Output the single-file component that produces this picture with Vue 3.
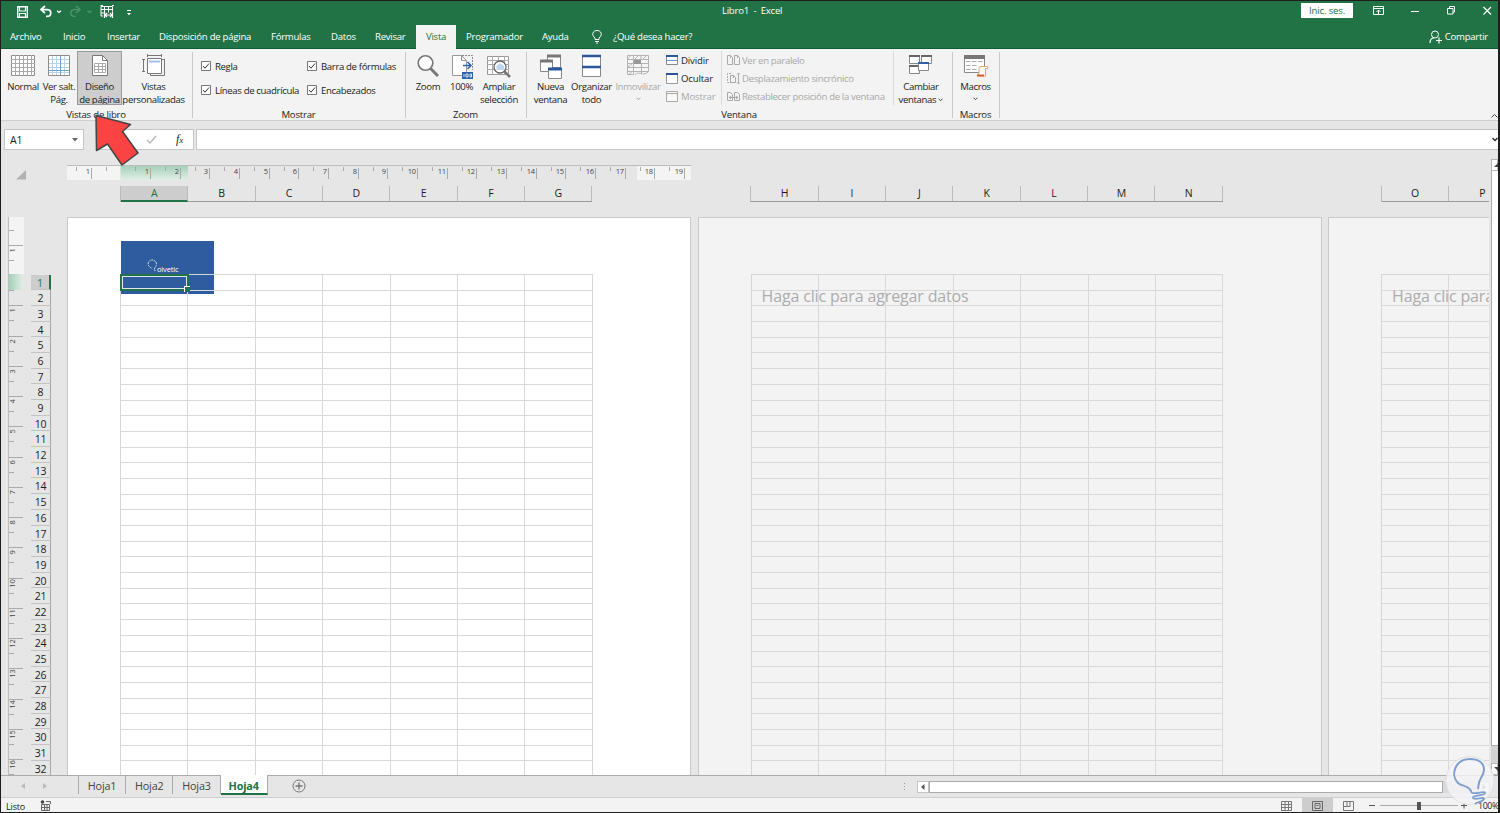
<template>
  <div class="window">
    <header class="titlebar">
      <div class="quick">
        <svg width="140" height="24" viewBox="0 0 140 24" fill="none" stroke="#fff">
          <path d="M16.7 5.7h9.6v10.6h-9.6z" stroke-width="1.4" />
          <path d="M18.5 6v4h6V6M18.5 16v-3.5h6V16" stroke-width="1.2" />
          <path d="M44 5l-4 3.6 4 3.4M40.5 8.6h5.5c5 0 5 6.6 0 6.8h-1" stroke-width="1.7" />
          <path d="M56 9.7l2 1.8 2-1.8" stroke-width="1.2" />
          <g stroke="#4f9470">
            <path d="M75 5l4 3.6-4 3.4M79 8.6h-5.5c-5 0-5 6.6 0 6.8h1" stroke-width="1.4" />
            <path d="M86.5 9.7l2 1.8 2-1.8" stroke-width="1.2" />
          </g>
          <path d="M111.5 10V5.500h-11.500v9.500h2M100 8.500h11.500M100 12h3M103.500 5.500v6M107.500 5.500v6M102 4.500h-2.500M113 4.500h-2" />
          <path d="M103.500 10.500v6.500M111.500 10.500v6.500M103.500 14h8M106 12l-2 2 2 2M109 12l2 2-2 2" stroke-width="1.2" />
          <path d="M126 9.5h4" />
          <path d="M126 12h4l-2 2.2z" fill="#fff" stroke="none" />
        </svg>
      </div>
      <div class="doc-title">Libro1&nbsp; -&nbsp; Excel</div>
      <div class="sign-in">Inic. ses.</div>
      <svg class="win-buttons" width="140" height="24" viewBox="0 0 140 24" fill="none" stroke="#fff">
        <path d="M15.5 5.5h10v8h-10zM15.5 7.5h10M20.5 13V9M18.5 11l2-2 2 2" />
        <path d="M53 10.5h8" />
        <path d="M89.5 7.5h5.500v5.500h-5.500zM91.500 7V5.500h5V11h-1.500" />
        <path d="M125.500 6l7.500 7.500M133 6l-7.500 7.500" stroke-width="1.2" />
      </svg>
    </header>

    <nav class="menu">
      <div
        v-for="tab in tabs"
        :key="tab.name"
        class="menu-tab"
        :class="{ active: tab.name === activeTab }"
        :style="{ width: tab.width + 'px' }"
        @click="activeTab = tab.name"
      ><span>{{ tab.name }}</span></div>
      <div class="tell-me">
        <svg width="12" height="15" viewBox="0 0 12 15" fill="none" stroke="#fff">
          <path d="M4 10.5V9C.2 6.200 1.500 1.500 6 1.500S11.800 6.200 8 9v1.500zM4 12.500h4M5 14h2" />
        </svg>
        <span>¿Qué desea hacer?</span>
      </div>
      <div class="share">
        <svg width="13" height="14" viewBox="0 0 13 14" fill="none" stroke="#fff">
          <circle cx="6" cy="4.5" r="3.5" />
          <path d="M1 13c0-3 1.500-5 4-5M7 10.500h6M10 7.500v6" stroke-width="1.2" />
        </svg>
        <span>Compartir</span>
      </div>
    </nav>

    <section class="ribbon">
      <div class="group g-views">
        <div class="buttons">
          <div class="btn b-normal">
            <svg width="26" height="23" viewBox="0 0 26 23" fill="#fff" stroke="#8c8c8c">
              <path d="M1.500 1.500h23v20h-23z" />
              <path d="M1 5.500h24M1 9.500h24M1 13.500h24M1 17.500h24M5.500 1v21M9.500 1v21M13.500 1v21M17.500 1v21M21.500 1v21" stroke="#aaa" />
            </svg>
            <span>Normal</span>
          </div>
          <div class="btn b-breaks">
            <svg width="24" height="23" viewBox="0 0 24 23" fill="#fff">
              <path d="M1.500 1.500h21v20h-21z" stroke="#8c8c8c" />
              <path d="M2 5.500h20M2 9.500h20M2 13.500h20M2 18.500h20M5.500 2v19M9.500 2v19M17.500 2v19" stroke="#b9d3ea" />
              <path d="M2 16.500h20M13.500 2v19" stroke="#6f9fd0" />
            </svg>
            <span>Ver salt.<br>Pág.</span>
          </div>
          <div class="btn b-layout selected">
            <svg width="20" height="24" viewBox="0 0 20 24" fill="#fff" stroke="#777">
              <path d="M2.500 1.500h10l5 5v15h-15z" />
              <path d="M12.500 1.500v5h5" fill="none" />
              <path d="M4.500 9.500h11v9h-11zM4.500 12.500h11M4.500 15.500h11M8.500 9.500v9M12.500 9.500v9" fill="none" stroke="#aaa" />
            </svg>
            <span>Diseño<br>de página</span>
          </div>
          <div class="btn b-custom">
            <svg width="24" height="24" viewBox="0 0 24 24" fill="none" stroke="#777">
              <path d="M5 1.500h15M5.500 0v3M19.500 0v3M1.500 5v13M0 5.500h3M0 17.500h3" />
              <path d="M8.500 20v1.500h14v-16H20" />
              <path d="M5.500 4.500h14v15h-14z" fill="#fff" />
              <path d="M7 7.500h11" stroke="#9fc0e6" stroke-width="2" />
            </svg>
            <span>Vistas<br>personalizadas</span>
          </div>
        </div>
        <div class="caption">Vistas de libro</div>
      </div>

      <div class="group g-show">
        <div class="checks">
          <label v-for="opt in options" :key="opt">
            <svg width="10" height="10" viewBox="0 0 10 10" fill="#fff" stroke="#777">
              <path d="M.5.5h9v9h-9z" />
              <path d="M2 5l2 2.200 4-4.700" fill="none" stroke="#333" />
            </svg>
            <span>{{ opt }}</span>
          </label>
        </div>
        <div class="caption">Mostrar</div>
      </div>

      <div class="group g-zoom">
        <div class="buttons">
          <div class="btn b-zoom">
            <svg width="24" height="24" viewBox="0 0 24 24" fill="#fff" stroke="#777">
              <path d="M14 14l8 8" stroke-width="3" />
              <circle cx="9.500" cy="9" r="7.300" stroke-width="1.600" />
            </svg>
            <span>Zoom</span>
          </div>
          <div class="btn b-hundred">
            <svg width="24" height="26" viewBox="0 0 24 26" fill="none">
              <path d="M2.500 1.500h9l5 5v15h-14z" fill="#fff" stroke="#999" />
              <path d="M11.500 1.500v5h5" stroke="#999" />
              <path d="M12 1.500h10.500V16" stroke="#888" stroke-dasharray="2 1" />
              <path d="M13 11.500h8M17.500 8l3.500 3.500-3.500 3.500" stroke="#2b62a8" stroke-width="1.500" />
              <path d="M12 18h11v7H12z" fill="#2b62a8" />
              <path d="M14 20v3M16 20h2v3h-2zM20 20h1.500v3H20z" stroke="#fff" stroke-width=".8" />
            </svg>
            <span>100%</span>
          </div>
          <div class="btn b-fit">
            <svg width="26" height="25" viewBox="0 0 26 25" fill="#fff" stroke="#999">
              <path d="M1.500 2.500h21v18h-21z" />
              <path d="M1 6.500h22M1 10.500h22M1 15.500h22M6.500 2v19M12.500 2v19M18.500 2v19" stroke="#aaa" />
              <path d="M18 17l6 6" stroke="#777" stroke-width="2.500" />
              <circle cx="14" cy="13" r="6" stroke="#666" stroke-width="1.300" />
              <path d="M10.500 16v-4l3.500-3 4 3v4z" fill="#bdd7ee" stroke="none" />
            </svg>
            <span>Ampliar<br>selección</span>
          </div>
        </div>
        <div class="caption">Zoom</div>
      </div>

      <div class="group g-window">
        <div class="buttons">
          <div class="btn b-new">
            <svg width="24" height="26" viewBox="0 0 24 26" fill="#fff" stroke="#888">
              <path d="M8.500 1.500h13v12h-13z" />
              <path d="M8 2h14" stroke="#777" stroke-width="3" />
              <path d="M1.500 6.500h12v11h-12z" />
              <path d="M1 7h13" stroke="#777" stroke-width="3" />
              <path d="M9.500 14.500h13v10h-13z" />
              <path d="M9 15h14" stroke="#2b579a" stroke-width="3" />
            </svg>
            <span>Nueva<br>ventana</span>
          </div>
          <div class="btn b-arrange">
            <svg width="20" height="24" viewBox="0 0 20 24" fill="#fff" stroke="#888">
              <path d="M.5 1.500h18v21H.5z" />
              <path d="M0 2h19M0 13h19" stroke="#2b579a" stroke-width="2.500" />
            </svg>
            <span>Organizar<br>todo</span>
          </div>
          <div class="btn b-freeze disabled">
            <svg width="24" height="24" viewBox="0 0 24 24" fill="#f6f6f6" stroke="#b3b3b3">
              <path d="M1.500 1.500h21v4h-21zM1.500 5.500h6v15h-6zM1.500 9.500h6M1.500 13.500h6M1.500 17.500h6M7.500 1.500v4M15 1.500v4M7.500 5.500h15v12h-15zM7.500 9.500h15M7.500 13.500h15M15.500 9v11M1.500 5l4-4M9 5l4-4M17 5l4-4M2 13l5-4M2 21l5-4M9 21c3-5 8 2 13-3" />
              <path d="M8 6h7v4H8z" fill="#999" stroke="none" />
            </svg>
            <span>Inmovilizar</span>
            <svg class="chev" width="5" height="4" viewBox="0 0 5 4"><path d="M.5.7l2 2 2-2" fill="none" stroke="#aaa" /></svg>
          </div>
        </div>
        <ul class="mini mini-left">
          <li>
            <svg width="12" height="11" viewBox="0 0 12 11" fill="#fff" stroke="#888">
              <path d="M.5.5h11v9H.5z" /><path d="M0 1h12" stroke="#2b579a" stroke-width="2" /><path d="M1 5.500h10" stroke="#6b98d0" />
            </svg>
            <span>Dividir</span>
          </li>
          <li>
            <svg width="12" height="11" viewBox="0 0 12 11" fill="#fff" stroke="#999">
              <path d="M.5.5h11v10H.5z" /><path d="M0 1h12" stroke="#2b579a" stroke-width="2" />
            </svg>
            <span>Ocultar</span>
          </li>
          <li class="disabled">
            <svg width="12" height="11" viewBox="0 0 12 11" fill="#f8f8f8" stroke="#aaa">
              <path d="M.5.5h11v10H.5zM0 2.500h12" />
            </svg>
            <span>Mostrar</span>
          </li>
        </ul>
        <ul class="mini mini-right disabled">
          <li>
            <svg width="13" height="11" viewBox="0 0 13 11" fill="none" stroke="#aaa">
              <path d="M.5.500h3l2 2v7h-5zM7.500.500h3l2 2v7h-5zM3.500 0v3M10.500 0v3" />
            </svg>
            <span>Ver en paralelo</span>
          </li>
          <li>
            <svg width="13" height="11" viewBox="0 0 13 11" fill="none" stroke="#aaa">
              <path d="M4 .5H.5v9H4" stroke-dasharray="2 1" /><path d="M3.500 2.500h3l2 2v5h-5zM6.500 2v3M11.500 0v11M10 1.500l1.500-1.500L13 1.500M10 9.500l1.500 1.500L13 9.500" />
            </svg>
            <span>Desplazamiento sincrónico</span>
          </li>
          <li>
            <svg width="13" height="11" viewBox="0 0 13 11" fill="none" stroke="#aaa">
              <path d="M.5 1.500h3l2 2v6h-5zM7.500 1.500h3l2 2v6h-5zM2 6.500h9M4 5L2 6.500 4 8M9 5l2 1.500L9 8" />
            </svg>
            <span>Restablecer posición de la ventana</span>
          </li>
        </ul>
        <div class="btn b-switch">
          <svg width="24" height="22" viewBox="0 0 24 22" fill="#fff" stroke="#888">
            <path d="M.5 1.500h10v8H.5zM12.500 1.500h10v8h-10zM.5 11.500h10v8H.5z" />
            <path d="M0 2h11M12 2h11M0 12h9" stroke="#666" stroke-width="2" />
            <path d="M9.500 8.500h10v8h-10z" />
            <path d="M9 9h11" stroke="#2b62a8" stroke-width="2" />
          </svg>
          <span>Cambiar<br>ventanas <svg class="inline-chev" width="5" height="4" viewBox="0 0 5 4"><path d="M.5.7l2 2 2-2" fill="none" stroke="#444" /></svg></span>
        </div>
        <div class="caption">Ventana</div>
      </div>

      <div class="group g-macros">
        <div class="btn b-macros">
          <svg width="26" height="24" viewBox="0 0 26 24" fill="#fff" stroke="#888">
            <path d="M1.500 1.500h20v17h-20z" />
            <path d="M1 3h21" stroke="#777" stroke-width="4" />
            <path d="M3 7.500h4.500M9 7.500h4.500M15 7.500h4.500M3 11.500h4.500M9 11.500h4.500M3 15.500h4.500M9 15.500h4.500" stroke="#aaa" />
            <path d="M17 12.500h7.500v2h-2V22h-7v-2H16v-6z" stroke="#e5a567" />
            <path d="M14 21.500h7" stroke="#d3602a" stroke-width="2" />
          </svg>
          <span>Macros</span>
          <svg class="chev" width="5" height="4" viewBox="0 0 5 4"><path d="M.5.7l2 2 2-2" fill="none" stroke="#444" /></svg>
        </div>
        <div class="caption">Macros</div>
      </div>
      <svg class="collapse" width="7" height="5" viewBox="0 0 7 5"><path d="M.5 4.500l3-3 3 3" fill="none" stroke="#444" /></svg>
    </section>

    <section class="formula-bar">
      <div class="name-box"><span>A1</span><svg width="6" height="4" viewBox="0 0 6 4"><path d="M0 0h6L3 3.500z" fill="#666" /></svg></div>
      <div class="fx-box">
        <svg width="11" height="9" viewBox="0 0 11 9"><path d="M1 5l3 3 6-7" fill="none" stroke="#bbb" stroke-width="1.500" /></svg>
        <i>f<small>x</small></i>
      </div>
      <div class="input-box"><svg width="6" height="5" viewBox="0 0 6 5"><path d="M.5 1l2.500 2.500L5.500 1" fill="none" stroke="#333" stroke-width="1.500" /></svg></div>
    </section>

    <main class="workspace">
      <div class="sheet">
        <div class="top">
          <div class="corner">
            <svg width="10" height="10" viewBox="0 0 10 10"><path d="M10 0v9.500H0z" fill="#b1b1b1" /></svg>
          </div>
          <div class="top-right">
            <svg class="h-ruler" width="624" height="16" viewBox="0 0 624 16">
              <defs>
                <linearGradient id="selH" x1="0" y1="0" x2="0" y2="1">
                  <stop offset="0" stop-color="#a5d0b8" /><stop offset="1" stop-color="#e2eee7" />
                </linearGradient>
              </defs>
              <path d="M0 1h53.500v14H0zM570 1h54v14h-54z" fill="#f4f4f4" />
              <path d="M53.500 1H121v14H53.500z" fill="url(#selH)" />
              <path d="M0 .5h624" stroke="#bdbdbd" />
              <g v-for="t in hTicks" :key="t.x">
                <path :d="`M${t.x} ${t.label ? 3 : 2}v${t.label ? 11 : 4}`" stroke="#aaa" />
                <text v-if="t.label" :x="t.x - 1.500" y="8.500" text-anchor="end">{{ t.label }}</text>
              </g>
            </svg>
            <div class="col-heads">
              <div v-for="(page, p) in pages" :key="p" class="head-block">
                <div v-for="c in page" :key="c" class="col-head" :class="{ current: c === 'A' }">{{ c }}</div>
              </div>
            </div>
          </div>
        </div>
        <div class="body">
          <svg class="v-ruler" width="16" height="558" viewBox="0 0 16 558">
            <defs>
              <linearGradient id="selV" x1="0" y1="0" x2="1" y2="0">
                <stop offset="0" stop-color="#a5d0b8" /><stop offset="1" stop-color="#e2eee7" />
              </linearGradient>
            </defs>
            <path d="M1 0h15v57H1z" fill="#f4f4f4" />
            <path d="M1 57h14v16H1z" fill="url(#selV)" />
            <path d="M.5 0v558" stroke="#bdbdbd" />
            <g v-for="t in vTicks" :key="t.y">
              <path :d="`M1 ${t.y}h${t.label ? 14 : 5}`" stroke="#aaa" />
              <text v-if="t.label" :transform="`translate(7 ${t.y + 5}) rotate(-90)`" text-anchor="middle">{{ t.label }}</text>
            </g>
          </svg>
          <div class="row-heads">
            <div v-for="n in 32" :key="n" class="row-head" :class="{ current: n === 1 }">{{ n }}</div>
          </div>
          <div class="pages">
            <div v-for="(page, p) in pages" :key="p" class="page" :class="{ inactive: p > 0 }">
              <div v-if="p === 0" class="picture">
                <svg width="12" height="14" viewBox="0 0 12 14" fill="none" stroke="#c6dcd0">
                  <path d="M4.500 9C-1 7 1 1 5 1s6 4 3 7.500L7 11l2 1" stroke-dasharray="2 .7" />
                </svg>
                <span>olvetic</span>
              </div>
              <div class="grid">
                <div v-for="n in 32" :key="n" class="grid-row">
                  <div v-for="c in page" :key="c" class="cell"></div>
                </div>
              </div>
              <div v-if="p === 0" class="selection"></div>
              <div v-else class="hint">{{ hints[p - 1] }}</div>
            </div>
          </div>
        </div>
      </div>
      <div class="v-scroll">
        <div class="v-arrow"><svg width="5" height="4" viewBox="0 0 5 4"><path d="M0 4l4-4 4 4z" fill="#444" /></svg></div>
        <div class="v-thumb"></div>
        <div class="v-track"></div>
        <div class="v-arrow"><svg width="5" height="4" viewBox="0 0 5 4"><path d="M0 0h8L4 4z" fill="#444" /></svg></div>
      </div>
    </main>

    <section class="sheet-tabs">
      <div class="nav-arrows">
        <svg width="4" height="6" viewBox="0 0 4 6"><path d="M4 0v6L0 3z" fill="#bbb" /></svg>
        <svg width="4" height="6" viewBox="0 0 4 6"><path d="M0 0v6l4-3z" fill="#bbb" /></svg>
      </div>
      <div
        v-for="s in sheets"
        :key="s"
        class="sheet-tab"
        :class="{ active: s === activeSheet }"
        @click="activeSheet = s"
      >{{ s }}</div>
      <svg class="add" width="14" height="14" viewBox="0 0 14 14" fill="none" stroke="#777">
        <circle cx="7" cy="7" r="6" /><path d="M3.500 7h7M7 3.500v7" stroke-width="1.400" />
      </svg>
      <div class="h-scroll">
        <svg class="dots" width="3" height="9" viewBox="0 0 3 9"><path d="M1 1h1v1H1zM1 4h1v1H1zM1 7h1v1H1z" fill="#999" /></svg>
        <div class="h-arrow"><svg width="4" height="6" viewBox="0 0 4 6"><path d="M3.500 0v6L0 3z" fill="#555" /></svg></div>
        <div class="h-thumb"></div>
        <div class="h-track"></div>
        <div class="h-arrow"><svg width="4" height="6" viewBox="0 0 4 6"><path d="M.5 0v6L4 3z" fill="#888" /></svg></div>
      </div>
    </section>

    <footer class="status">
      <span class="ready">Listo</span>
      <svg class="rec" width="11" height="11" viewBox="0 0 11 11" fill="none" stroke="#666">
        <path d="M1.500 4.500h8v6h-8zM1.500 7.500h8M4.500 4v6M7 4v6M6 1.500h4.500V4" /><circle cx="2.500" cy="2" r="1.800" fill="#444" stroke="none" />
      </svg>
      <div class="status-right">
        <div class="view"><svg width="12" height="11" viewBox="0 0 12 11"><path d="M.5.5h10v9H.5zM.5 3.500h10M.5 6.500h10M4 .5v9M7.500.5v9" fill="none" stroke="#777" /></svg></div>
        <div class="view on"><svg width="12" height="11" viewBox="0 0 12 11"><path d="M.5.5h10v9H.5zM3 2.500h5v5H3zM4.500 4.500h2" fill="none" stroke="#666" /></svg></div>
        <div class="view"><svg width="12" height="11" viewBox="0 0 12 11"><path d="M.5.5h10v9H.5zM.5 5.500H7V.5M4 .5v5" fill="none" stroke="#777" /></svg></div>
        <svg class="slider" width="100" height="13" viewBox="0 0 100 13" fill="none" stroke="#555">
          <path d="M1 7.500h6M93 7.500h6M96 4.500v6" />
          <path d="M12 7.500h78" stroke="#aaa" />
          <path d="M49 4h4v8h-4z" fill="#555" stroke="none" />
        </svg>
        <span class="percent">100%</span>
      </div>
    </footer>

    <svg class="pointer" width="48" height="56" viewBox="0 0 48 56">
      <path d="M4 4.500l34.500 9-8 7L46 42 30 54 15.500 33l-11 6.500z" fill="#fb4343" stroke="#444" stroke-width="1.500" stroke-linejoin="round" />
    </svg>
    <svg class="badge" width="54" height="54" viewBox="0 0 54 54" fill="none">
      <circle cx="27" cy="26.500" r="24" fill="#f4f4f6" fill-opacity=".82" stroke="#e2e2e6" />
      <path d="M28 37c-3-6-8-4-13-8C7 21 12 5 27 5c14 0 17 10 11 19-3 4-2 7-3 11" stroke="#7f9fce" stroke-width="2" />
      <path d="M28 36C27 43 42 36 42 39S29 41 30 44s12-2 11 1-7 3-9 5" stroke="#7f9fce" stroke-width="1.800" />
    </svg>
  </div>
</template>

<script setup>
import { ref } from 'vue';

const activeTab = ref('Vista');
const activeSheet = ref('Hoja4');

const tabs = [
  { name: 'Archivo', width: 52 },
  { name: 'Inicio', width: 44 },
  { name: 'Insertar', width: 52 },
  { name: 'Disposición de página', width: 112 },
  { name: 'Fórmulas', width: 60 },
  { name: 'Datos', width: 44 },
  { name: 'Revisar', width: 51 },
  { name: 'Vista', width: 40 },
  { name: 'Programador', width: 76 },
  { name: 'Ayuda', width: 48 },
];

const options = ['Regla', 'Barra de fórmulas', 'Líneas de cuadrícula', 'Encabezados'];
const sheets = ['Hoja1', 'Hoja2', 'Hoja3', 'Hoja4'];

// only the first two columns of the last page are in view
const pages = [
  ['A', 'B', 'C', 'D', 'E', 'F', 'G'],
  ['H', 'I', 'J', 'K', 'L', 'M', 'N'],
  ['O', 'P'],
];
const hints = ['Haga clic para agregar datos', 'Haga clic para'];

// one entry per half centimetre; whole centimetres carry a number
const hTicks = [];
for (let i = -3; i <= 38; i++) {
  if (i === 0) continue;
  const x = Math.floor(54 + i * 14.83) + 0.5;
  hTicks.push({ x, label: i % 2 === 0 ? Math.abs(i / 2) : '' });
}

const vTicks = [];
for (let i = -3; i <= 36; i++) {
  if (i === 0) continue;
  const y = Math.floor(58.5 + i * 15.13) + 0.5;
  vTicks.push({ y, label: i % 2 === 0 && i < 34 ? Math.abs(i / 2) : '' });
}
</script>

<style>
body {
  margin: 0;
  overflow: hidden;
}
</style>

<style scoped>
* {
  box-sizing: border-box;
}

svg {
  display: block;
  flex: none;
}

.window {
  position: relative;
  display: flex;
  flex-direction: column;
  width: 1500px;
  height: 813px;
  border: 1px solid #1e1e1e;
  border-right-width: 2px;
  background: #e6e6e6;
  color: #1c1c1c;
  font-family: "Open Sans", "Noto Sans", sans-serif;
  font-size: 9.6px;
  letter-spacing: -0.15px;
  overflow: hidden;
  white-space: nowrap;
}

.titlebar {
  display: flex;
  height: 24px;
  background: #217346;
  color: #fff;
}

.quick {
  width: 722px;
}

.doc-title {
  width: 580px;
  line-height: 20px;
  letter-spacing: -0.25px;
}

.sign-in {
  width: 52px;
  height: 15px;
  margin-top: 2px;
  background: #fff;
  color: #217346;
  text-align: center;
  line-height: 16px;
}

.win-buttons {
  margin-left: 5px;
}

.menu {
  display: flex;
  height: 24px;
  background: #217346;
  border-bottom: 1px solid #0e5c36;
  color: #fff;
  letter-spacing: -0.26px;
}

.menu-tab {
  padding-left: 10px;
  line-height: 23px;
  flex: none;
}

.menu-tab:first-child {
  padding-left: 9px;
}

.menu-tab.active {
  height: 24px;
  background: #f3f3f3;
  color: #217346;
}

.tell-me {
  display: flex;
  align-items: center;
  gap: 10px;
  margin-left: 11px;
}

.share {
  display: flex;
  align-items: center;
  gap: 3px;
  margin-left: auto;
  padding-right: 10px;
}

.ribbon {
  display: flex;
  position: relative;
  height: 72px;
  background: #f3f3f3;
  border-bottom: 1px solid #cfcfcf;
  letter-spacing: -0.35px;
}

.group {
  position: relative;
  display: flex;
  height: 71px;
}

.group::after {
  content: "";
  position: absolute;
  right: 0;
  top: 3px;
  height: 66px;
  border-right: 1px solid #c9c9c9;
}

.caption {
  position: absolute;
  left: 0;
  right: 2px;
  bottom: -1px;
  height: 12px;
  line-height: 12px;
  text-align: center;
  letter-spacing: -0.2px;
}

.g-views { width: 192px; }
.g-show { width: 213px; }
.g-zoom { width: 121px; }
.g-window { width: 426px; }
.g-macros { width: 47px; }

.buttons {
  display: flex;
}

.btn {
  display: flex;
  flex-direction: column;
  flex: none;
  align-items: center;
  height: 54px;
  margin-top: 2px;
  padding-top: 3px;
  text-align: center;
  line-height: 12.5px;
}

.btn > svg:first-child {
  margin-bottom: auto;
}

.btn > span {
  height: 26px;
  margin-bottom: -2px;
}

.btn > .chev {
  position: absolute;
  top: 48px;
}

.inline-chev {
  display: inline-block;
  vertical-align: 1px;
}

.b-normal { width: 44px; }
.b-breaks { width: 36px; margin-left: -4px; }
.b-layout { width: 45px; }
.b-custom { width: 63px; }
.b-zoom { width: 44px; }
.b-hundred { width: 23px; }
.b-fit { width: 52px; }
.b-new { width: 47px; }
.b-arrange { width: 35px; }
.b-freeze { width: 58px; }
.b-switch { width: 54px; }
.b-macros { width: 45px; }

.selected {
  background: #cdcdcd;
  outline: 1px solid #9a9a9a;
  outline-offset: -1px;
}

.disabled {
  color: #a9a9a9;
}

.checks {
  display: grid;
  grid-template-columns: 106px 100px;
  grid-template-rows: 24px 24px;
  padding: 5px 0 0 8px;
}

.checks label {
  display: flex;
  align-items: center;
  gap: 4px;
}

.mini {
  display: flex;
  flex-direction: column;
  list-style: none;
  height: 54px;
  margin: 2px 0 0;
  padding: 0;
}

.mini li {
  display: flex;
  align-items: center;
  gap: 3px;
  height: 18px;
}

.mini-left {
  width: 56px;
  margin-left: -1px;
  border-right: 1px solid #dadada;
  letter-spacing: -0.15px;
}

.mini-right {
  width: 172px;
  padding-left: 5px;
  border-right: 1px solid #dadada;
}

.mini-right li {
  gap: 2px;
}

.collapse {
  margin: 64px 0 0 auto;
}

.formula-bar {
  display: flex;
  height: 29px;
  padding-top: 8px;
}

.name-box,
.fx-box,
.input-box {
  display: flex;
  align-items: center;
  height: 21px;
  border: 1px solid #c6c6c6;
  background: #fff;
}

.name-box {
  width: 80px;
  margin-left: 3px;
  padding: 0 5px 0 5px;
  justify-content: space-between;
  font-size: 10.5px;
}

.fx-box {
  width: 98px;
  margin-left: 12px;
  padding-left: 49px;
  gap: 19px;
}

.fx-box i {
  font-family: "Liberation Serif", serif;
  font-size: 12px;
  line-height: 16px;
}

.fx-box small {
  font-size: 9px;
}

.input-box {
  flex: 1;
  margin-left: 2px;
  border-right: 0;
  justify-content: flex-end;
}

.workspace {
  display: flex;
  height: 625px;
}

.sheet {
  flex: none;
  width: 1488px;
  height: 625px;
  overflow: hidden;
}

.top {
  display: flex;
  height: 67px;
  padding-top: 15px;
}

.corner {
  flex: none;
  width: 66px;
  padding: 5px 0 0 15px;
}

.h-ruler text,
.v-ruler text {
  font-size: 7.5px;
  fill: #444;
}

.col-heads {
  display: flex;
  gap: 158px;
  padding: 5px 0 0 53px;
}

.head-block {
  display: flex;
  flex: none;
  height: 16px;
  border-left: 1px solid #bbb;
  border-bottom: 1px solid #9c9c9c;
}

.col-head {
  flex: none;
  width: 67.35px;
  border-right: 1px solid #bbb;
  text-align: center;
  font-size: 10.5px;
  line-height: 15px;
}

.col-head.current {
  height: 16px;
  background: #cdcdcd;
  border-bottom: 2px solid #217346;
  color: #217346;
}

.body {
  display: flex;
  height: 558px;
}

.v-ruler {
  margin-left: 7px;
}

.row-heads {
  flex: none;
  width: 20px;
  margin-left: 7px;
  padding-top: 57.5px;
}

.row-head {
  height: 15.7px;
  border-bottom: 1px solid #c3c3c3;
  border-right: 1px solid #a5a5a5;
  text-align: center;
  font-size: 10.5px;
  line-height: 16px;
}

.row-head.current {
  background: #cdcdcd;
  border-right: 2px solid #217346;
  color: #217346;
}

.pages {
  display: flex;
  flex: none;
  gap: 6.5px;
  margin-left: 16px;
}

.page {
  position: relative;
  flex: none;
  width: 624px;
  height: 558px;
  padding: 56px 0 0 52px;
  background: #fff;
  border: 1px solid #c9c9c9;
  border-bottom: 0;
  overflow: hidden;
}

.page.inactive {
  background: #f3f3f3;
}

.grid {
  position: relative;
  width: max-content;
  border-top: 1px solid #d6d6d6;
  border-left: 1px solid #d6d6d6;
}

.grid-row {
  display: flex;
  height: 15.7px;
}

.cell {
  flex: none;
  width: 67.42px;
  border-right: 1px solid #d9d9d9;
  border-bottom: 1px solid #d9d9d9;
}

.picture {
  position: absolute;
  left: 53px;
  top: 23px;
  display: flex;
  width: 93px;
  height: 53px;
  padding: 18px 0 0 26px;
  background: #2f5b9f;
  color: #fff;
  font-size: 7.5px;
}

.picture span {
  margin: 5px 0 0 -2px;
}

.selection {
  position: absolute;
  left: 52px;
  top: 56px;
  width: 69px;
  height: 17px;
  border: 2px solid #217346;
  box-shadow: inset 0 0 0 1px #dde6f2;
  background: #2f5b9f;
}

.selection::after {
  content: "";
  position: absolute;
  right: -3px;
  bottom: -3px;
  width: 5px;
  height: 5px;
  background: #217346;
  border: 1px solid #fff;
  border-right: 0;
  border-bottom: 0;
}

.hint {
  position: absolute;
  left: 63px;
  top: 66px;
  color: #acacac;
  font-size: 16px;
  line-height: 24px;
}

.v-scroll {
  display: flex;
  flex-direction: column;
  width: 7px;
  margin-left: 2px;
  padding-top: 9px;
}

.v-arrow {
  height: 12px;
  padding: 3px 0 0 2px;
  border: 1px solid #b5b5b5;
  background: #fff;
}

.v-thumb {
  height: 576px;
  background: #fff;
  border-left: 1px solid #ababab;
  border-bottom: 1px solid #ababab;
}

.v-track {
  height: 17px;
  background: #d4d4d4;
}

.sheet-tabs {
  display: flex;
  height: 23px;
  border-top: 1px solid #ababab;
  border-bottom: 1px solid #cfcfcf;
  color: #444;
  font-size: 10.8px;
}

.nav-arrows {
  display: flex;
  gap: 18px;
  width: 78px;
  padding: 7px 0 0 20px;
  border-right: 1px solid #ababab;
  height: 18px;
}

.sheet-tab {
  width: 47.2px;
  height: 18px;
  border-right: 1px solid #ababab;
  line-height: 20px;
  text-align: center;
}

.sheet-tab.active {
  height: 20px;
  margin-top: -1px;
  background: #fff;
  border-bottom: 2px solid #217346;
  color: #217346;
  font-weight: bold;
  line-height: 21px;
}

.add {
  margin: 3px 0 0 24px;
}

.h-scroll {
  display: flex;
  margin: 5px 8px 0 auto;
  height: 12px;
}

.dots {
  margin: 1px 11px 0 0;
}

.h-arrow {
  width: 12px;
  height: 12px;
  padding: 2px 0 0 3px;
  background: #fff;
  border: 1px solid #c3c3c3;
}

.h-thumb {
  width: 514px;
  background: #fff;
  border: 1px solid #ababab;
}

.h-track {
  width: 35px;
  background: #dadada;
}

.status {
  display: flex;
  height: 14px;
  background: #f3f3f3;
}

.ready {
  width: 34px;
  padding-left: 5px;
  line-height: 17px;
  font-size: 9px;
}

.rec {
  margin: 2px 0 0 5px;
}

.status-right {
  display: flex;
  margin-left: auto;
}

.view {
  width: 31px;
  padding: 3px 0 0 10px;
}

.view.on {
  background: #cdcdcd;
}

.slider {
  margin: 0 10px 0 4px;
}

.percent {
  width: 20px;
  line-height: 17px;
  font-size: 8.8px;
  letter-spacing: -0.4px;
}

.pointer {
  position: absolute;
  left: 91px;
  top: 110px;
}

.badge {
  position: absolute;
  left: 1442px;
  top: 753px;
}
</style>
